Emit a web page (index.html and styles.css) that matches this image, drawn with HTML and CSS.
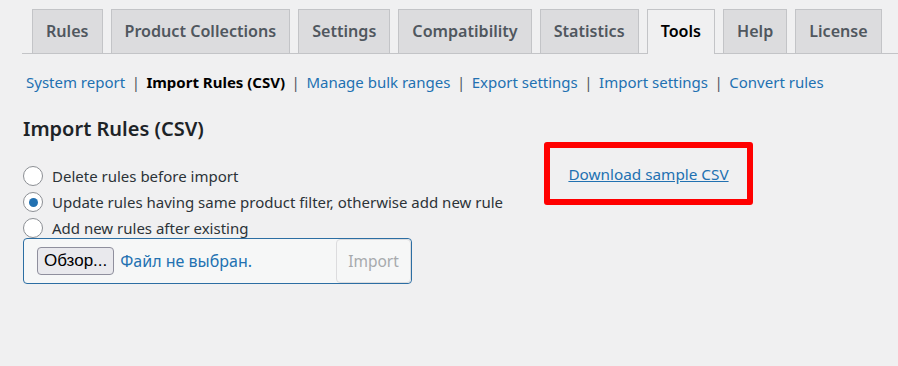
FILE: index.html
```html
<!DOCTYPE html>
<html lang="en">
<head>
    <meta charset="UTF-8">
    <title>Tools - Import Rules (CSV)</title>
    <link rel="stylesheet" href="styles.css">
</head>
<body>
    <div class="wrap">
        <nav class="nav-tab-wrapper">
            <a class="nav-tab" href="#">Rules</a>
            <a class="nav-tab" href="#">Product Collections</a>
            <a class="nav-tab" href="#">Settings</a>
            <a class="nav-tab" href="#">Compatibility</a>
            <a class="nav-tab" href="#">Statistics</a>
            <a class="nav-tab nav-tab-active" href="#">Tools</a>
            <a class="nav-tab" href="#">Help</a>
            <a class="nav-tab" href="#">License</a>
        </nav>

        <ul class="subsubsub">
            <li><a href="#">System report</a></li>
            <li class="sep">|</li>
            <li><a class="current" href="#">Import Rules (CSV)</a></li>
            <li class="sep">|</li>
            <li><a href="#">Manage bulk ranges</a></li>
            <li class="sep">|</li>
            <li><a href="#">Export settings</a></li>
            <li class="sep">|</li>
            <li><a href="#">Import settings</a></li>
            <li class="sep">|</li>
            <li><a href="#">Convert rules</a></li>
        </ul>

        <div class="tool-section">
            <form class="import-form">
                <h2 class="section-title">Import Rules (CSV)</h2>

                <label class="radio-row">
                    <input type="radio" name="mode" value="delete">
                    <span>Delete rules before import</span>
                </label>
                <label class="radio-row">
                    <input type="radio" name="mode" value="update" checked>
                    <span>Update rules having same product filter, otherwise add new rule</span>
                </label>
                <label class="radio-row">
                    <input type="radio" name="mode" value="add">
                    <span>Add new rules after existing</span>
                </label>

                <div class="file-box">
                    <span class="file-btn">Обзор...</span>
                    <span class="file-name">Файл не выбран.</span>
                    <button class="import-btn" type="button" disabled>Import</button>
                </div>
            </form>

            <div class="sample-box">
                <a href="#">Download sample CSV</a>
            </div>
        </div>
    </div>
</body>
</html>
```

FILE: styles.css
```css
body {
    margin: 0;
    background: #f0f0f1;
    color: #3c434a;
    font-family: 'Noto Sans', 'Open Sans', sans-serif;
    font-size: 15px;
}

a {
    color: #2271b1;
    text-decoration: none;
}

.wrap {
    padding-left: 22px;
}

/* Tabs */
.nav-tab-wrapper {
    display: flex;
    gap: 8px;
    padding: 9px 0 0 10px;
    border-bottom: 1px solid #c3c4c7;
}

.nav-tab {
    display: block;
    flex-shrink: 0;
    white-space: nowrap;
    height: 43px;
    line-height: 43px;
    padding: 0 13px;
    margin-bottom: -1px;
    border: 1px solid #c3c4c7;
    border-bottom: none;
    background: #dcdcde;
    color: #50575e;
    font-size: 16.1px;
    font-weight: 600;
}

.nav-tab-active {
    background: #f0f0f1;
    color: #000;
    height: 44px;
}

/* Sub links */
.subsubsub {
    display: flex;
    gap: 6.5px;
    list-style: none;
    margin: 16px 0 0 4px;
    padding: 0;
    font-size: 15px;
    line-height: 24px;
}

.subsubsub .sep {
    color: #50575e;
}

.subsubsub .current {
    color: #000;
    font-weight: 700;
}

/* Import section */
.tool-section {
    display: flex;
    align-items: flex-start;
}

.import-form {
    width: 521px;
    margin-left: 1px;
}

.section-title {
    margin: 21px 0 20px;
    font-size: 20px;
    font-weight: 600;
    line-height: 28px;
    color: #1d2327;
}

.radio-row {
    display: flex;
    align-items: center;
    gap: 9px;
    height: 26px;
    color: #2c3338;
}

.radio-row input {
    appearance: none;
    width: 20px;
    height: 20px;
    margin: 0;
    border: 1px solid #8c8f94;
    border-radius: 50%;
    background: #fff;
    display: grid;
    place-items: center;
}

.radio-row input:checked::before {
    content: "";
    width: 9px;
    height: 9px;
    border-radius: 50%;
    background: #2271b1;
}

.file-box {
    display: flex;
    align-items: center;
    width: 387px;
    height: 44px;
    margin-top: -3px;
    border: 1px solid #2c6ea3;
    border-radius: 4px;
    background: #f6f7f7;
}

.file-btn {
    margin-left: 13px;
    padding: 0 6px;
    height: 26px;
    line-height: 26px;
    border: 1px solid #8f8f9d;
    border-radius: 4px;
    background: #e9e9ed;
    color: #000;
    font-family: 'Liberation Sans', sans-serif;
    font-size: 17px;
}

.file-name {
    margin-left: 6px;
    color: #2271b1;
    font-size: 16px;
}

.import-btn {
    margin-left: auto;
    align-self: stretch;
    width: 75px;
    border: 1px solid #dcdcde;
    border-radius: 4px;
    background: #f6f7f7;
    color: #a7aaad;
    font-family: inherit;
    font-size: 15.5px;
    padding: 0;
}

.sample-box {
    margin-top: 48px;
    width: 197px;
    height: 51px;
    border: 6px solid #ff0000;
    border-radius: 3px;
    display: flex;
    align-items: center;
    justify-content: center;
}

.sample-box a {
    text-decoration: underline;
    font-size: 15.3px;
}
```
